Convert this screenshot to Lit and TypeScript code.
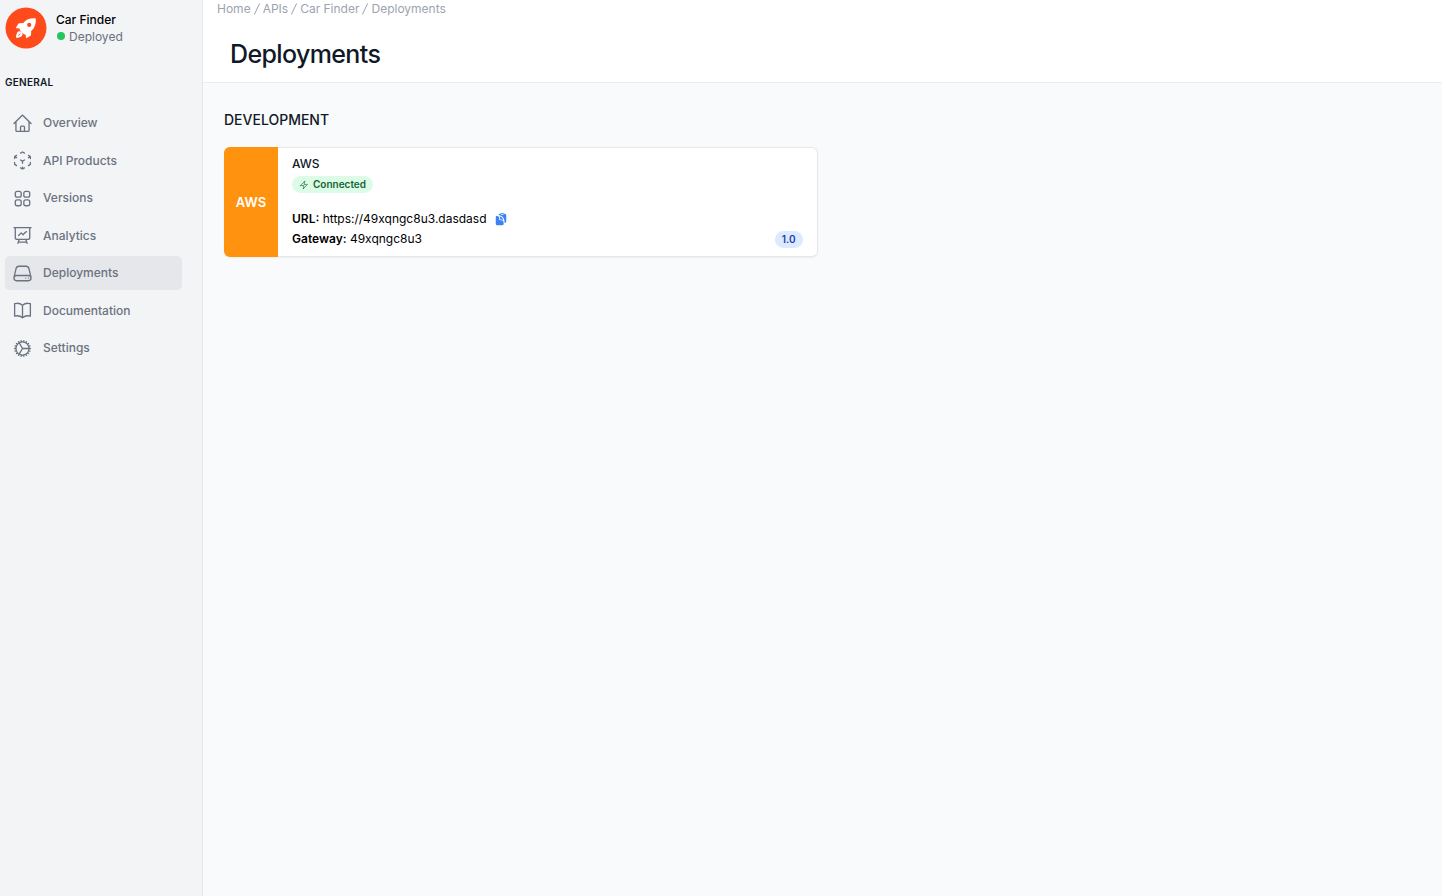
import { LitElement, html, css, svg } from "lit";
import { customElement } from "lit/decorators.js";

interface NavItem {
  label: string;
  icon: string;
  active?: boolean;
}

const NAV: NavItem[] = [
  {
    label: "Overview",
    icon: "m2.25 12 8.954-8.955c.44-.439 1.152-.439 1.591 0L21.75 12M4.5 9.75v10.125c0 .621.504 1.125 1.125 1.125H9.75v-4.875c0-.621.504-1.125 1.125-1.125h2.25c.621 0 1.125.504 1.125 1.125V21h4.125c.621 0 1.125-.504 1.125-1.125V9.75M8.25 21h8.25",
  },
  {
    label: "API Products",
    icon: "m21 7.5-2.25-1.313M21 7.5v2.25m0-2.25-2.25 1.313M3 7.5l2.25-1.313M3 7.5l2.25 1.313M3 7.5v2.25m9 3 2.25-1.313M12 12.75l-2.25-1.313M12 12.75V15m0 6.75 2.25-1.313M12 21.75V19.5m0 2.25-2.25-1.313m0-16.875L12 2.25l2.25 1.313M21 14.25v2.25l-2.25 1.313m-13.5 0L3 16.5v-2.25",
  },
  {
    label: "Versions",
    icon: "M3.75 6A2.25 2.25 0 0 1 6 3.75h2.25A2.25 2.25 0 0 1 10.5 6v2.25a2.25 2.25 0 0 1-2.25 2.25H6a2.25 2.25 0 0 1-2.25-2.25V6ZM3.75 15.75A2.25 2.25 0 0 1 6 13.5h2.25a2.25 2.25 0 0 1 2.25 2.25V18a2.25 2.25 0 0 1-2.25 2.25H6A2.25 2.25 0 0 1 3.75 18v-2.25ZM13.5 6a2.25 2.25 0 0 1 2.25-2.25H18A2.25 2.25 0 0 1 20.25 6v2.25A2.25 2.25 0 0 1 18 10.5h-2.25a2.25 2.25 0 0 1-2.25-2.25V6ZM13.5 15.75a2.25 2.25 0 0 1 2.25-2.25H18a2.25 2.25 0 0 1 2.25 2.25V18A2.25 2.25 0 0 1 18 20.25h-2.25A2.25 2.25 0 0 1 13.5 18v-2.25Z",
  },
  {
    label: "Analytics",
    icon: "M3.75 3v11.25A2.25 2.25 0 0 0 6 16.5h2.25M3.75 3h-1.5m1.5 0h16.5m0 0h1.5m-1.5 0v11.25A2.25 2.25 0 0 1 18 16.5h-2.25m-7.5 0h7.5m-7.5 0-1 3m8.5-3 1 3m0 0 .5 1.5m-.5-1.5h-9.5m0 0-.5 1.5m.75-9 3-3 2.148 2.148A12.061 12.061 0 0 1 16.5 7.605",
  },
  {
    label: "Deployments",
    active: true,
    icon: "M21.75 17.25v-.228a4.5 4.5 0 0 0-.12-1.03l-2.268-9.64a3.375 3.375 0 0 0-3.285-2.602H7.923a3.375 3.375 0 0 0-3.285 2.602l-2.268 9.64a4.5 4.5 0 0 0-.12 1.03v.228m19.5 0a3 3 0 0 1-3 3H5.25a3 3 0 0 1-3-3m19.5 0a3 3 0 0 0-3-3H5.25a3 3 0 0 0-3 3m16.5 0h.008v.008h-.008v-.008Zm-3 0h.008v.008h-.008v-.008Z",
  },
  {
    label: "Documentation",
    icon: "M12 6.042A8.967 8.967 0 0 0 6 3.75c-1.052 0-2.062.18-3 .512v14.25A8.987 8.987 0 0 1 6 18c2.305 0 4.408.867 6 2.292m0-14.25a8.966 8.966 0 0 1 6-2.292c1.052 0 2.062.18 3 .512v14.25A8.987 8.987 0 0 0 18 18a8.967 8.967 0 0 0-6 2.292m0-14.25v14.25",
  },
  {
    label: "Settings",
    icon: "M4.5 12a7.5 7.5 0 0 0 15 0m-15 0a7.5 7.5 0 1 1 15 0m-15 0H3m16.5 0H21m-1.5 0H12m-8.457 3.077 1.41-.513m14.095-5.13 1.41-.513M5.106 17.785l1.15-.964m11.49-9.642 1.149-.964M7.501 19.795l.75-1.3m7.5-12.99.75-1.3m-6.063 16.658.26-1.477m2.605-14.772.26-1.477m0 17.726-.26-1.477M10.698 4.614l-.26-1.477M16.5 19.794l-.75-1.299M7.5 4.205 12 12m6.894 5.785-1.149-.964M6.256 7.178l-1.15-.964m15.352 8.864-1.41-.513M4.954 9.435l-1.41-.514M12.002 12l-3.75 6.495",
  },
];

const BOLT = "m3.75 13.5 10.5-11.25L12 10.5h8.25L9.75 21.75 12 13.5H3.75Z";

const outline = (d: string, cls: string) => html`
  <svg class=${cls} viewBox="0 0 24 24" fill="none" stroke="currentColor" stroke-width="1.5"
    stroke-linecap="round" stroke-linejoin="round" aria-hidden="true">${svg`<path d=${d} />`}</svg>`;

@customElement("app-sidebar")
export class AppSidebar extends LitElement {
  static styles = css`
    :host { display: block; }
    .brand { display: flex; align-items: center; gap: 9px; height: 41px; }
    .logo { width: 42px; height: 42px; flex: none; }
    .name { font-size: 12px; line-height: 17px; font-weight: 500; color: #000; }
    .state { display: flex; align-items: center; gap: 4px; font-size: 12px; line-height: 17px; color: #6b7280; padding-left: 1px; }
    .dot { width: 8px; height: 8px; border-radius: 50%; background: #22c55e; }
    .group { margin: 27px 0 17px; font-size: 10px; line-height: 14px; font-weight: 600; letter-spacing: 0.025em; color: #111827; }
    .list { display: flex; flex-direction: column; justify-content: space-between; min-height: 259px; margin: 0; padding: 0; list-style: none; }
    .item { display: flex; align-items: center; gap: 10px; box-sizing: border-box; height: 34px; padding: 0 7px; border-radius: 5px; font-size: 12px; line-height: 20px; font-weight: 500; color: #6b7280; text-decoration: none; }
    .active { background: #e5e7eb; }
    .icon { width: 21px; height: 21px; flex: none; }
  `;

  render() {
    return html`
      <div class="brand">
        <svg class="logo" viewBox="0 0 42 42" aria-hidden="true">
          <circle cx="21" cy="21" r="20.5" fill="#ff4a1c" />
          <path fill="#fff" d="M30.700 11.400c-5-.5-9.200.8-12.500 4.600l-3.700.2c-.6 0-1.100.3-1.400.8l-2 3.400c-.2.4 0 .8.500.8l3.200.4c-.3.8-.2 1.300.3 1.900l3.600 3.600c.6.500 1.100.6 1.900.3l.4 3.200c0 .5.400.7.800.500l3.400-2c.5-.3.8-.8.800-1.400l.2-3.700c3.700-3.300 5-7.600 4.500-12.600Z" />
          <circle cx="24.200" cy="17.900" r="2.100" fill="#ff4a1c" />
          <path fill="#fff" d="M13 24.800c-1.400 1.200-2 3.200-2 6 2.800 0 4.800-.6 6-2 .8-1 .7-2.500-.2-3.500-1.100-1.100-2.700-1.300-3.800-.5Z" />
          <path d="m13.600 28.200 1.500-1.500" stroke="#ff4a1c" stroke-width="1" stroke-linecap="round" />
        </svg>
        <div>
          <div class="name">Car Finder</div>
          <div class="state"><span class="dot"></span>Deployed</div>
        </div>
      </div>
      <h2 class="group">GENERAL</h2>
      <nav aria-label="General">
        <ul class="list">
          ${NAV.map(
            (n) => html`<li>
              <a class="item ${n.active ? "active" : ""}" href="#" aria-current=${n.active ? "page" : "false"}>
                ${outline(n.icon, "icon")}<span>${n.label}</span>
              </a>
            </li>`
          )}
        </ul>
      </nav>
    `;
  }
}

@customElement("deployment-card")
export class DeploymentCard extends LitElement {
  static styles = css`
    :host { display: block; }
    .card { display: flex; background: #fff; border-radius: 6px; overflow: hidden; box-shadow: inset 0 0 0 1px #e5e7eb, 0 1px 2px rgba(0, 0, 0, 0.06); }
    .mark { display: flex; align-items: center; justify-content: center; width: 54px; flex: none; background: #ff930f; color: #fff; font-size: 13px; font-weight: 600; }
    .body { flex: 1; padding: 8px 15px 8px 14px; font-size: 12px; line-height: 20px; color: #000; }
    .title { margin: 0; font-size: 12px; line-height: 18px; font-weight: 500; color: #111827; }
    .pill { display: inline-flex; align-items: center; border-radius: 9px; padding: 0 7px; font-size: 10px; line-height: 17px; font-weight: 600; }
    .ok { gap: 4px; background: #dcfce7; color: #166534; }
    .version { background: #dbeafe; color: #1e40af; }
    .bolt { width: 10px; height: 10px; }
    .head { display: flex; flex-direction: column; align-items: flex-start; gap: 3px; margin-bottom: 16px; }
    .row { display: flex; align-items: center; }
    .url { gap: 7px; }
    .foot { justify-content: space-between; }
    .copy { display: flex; padding: 0; border: 0; background: none; color: #3b82f6; cursor: pointer; }
    .clip { width: 14px; height: 14px; }
    b { font-weight: 600; }
  `;

  render() {
    return html`
      <article class="card">
        <div class="mark">AWS</div>
        <div class="body">
          <div class="head">
            <h3 class="title">AWS</h3>
            <span class="pill ok">${outline(BOLT, "bolt")}Connected</span>
          </div>
          <div class="row url">
            <span><b>URL:</b> https://49xqngc8u3.dasdasd</span>
            <button class="copy" type="button" aria-label="Copy URL">
              <svg class="clip" viewBox="0 0 24 24" fill="currentColor" aria-hidden="true">
                <path fill-rule="evenodd" d="M17.663 3.118c.225.015.45.032.673.050C19.876 3.298 21 4.604 21 6.109v9.642a3 3 0 0 1-3 3V16.500c0-5.922-4.576-10.775-10.384-11.217.324-1.132 1.300-2.010 2.548-2.114.224-.019.448-.036.673-.051A3 3 0 0 1 13.500 1.500H15a3 3 0 0 1 2.663 1.618ZM12 4.500A1.500 1.500 0 0 1 13.500 3H15a1.500 1.500 0 0 1 1.500 1.500H12Z" clip-rule="evenodd" />
                <path d="M3 8.625c0-1.036.84-1.875 1.875-1.875h.375A3.750 3.750 0 0 1 9 10.500v1.875c0 1.036.84 1.875 1.875 1.875h1.875A3.750 3.750 0 0 1 16.500 18v2.625c0 1.035-.84 1.875-1.875 1.875h-9.750A1.875 1.875 0 0 1 3 20.625v-12Z" />
                <path d="M10.500 10.500a5.230 5.230 0 0 0-1.279-3.434 9.768 9.768 0 0 1 6.963 6.963 5.230 5.230 0 0 0-3.434-1.279h-1.875a.375.375 0 0 1-.375-.375V10.500Z" />
              </svg>
            </button>
          </div>
          <div class="row foot">
            <span><b>Gateway:</b> 49xqngc8u3</span>
            <span class="pill version">1.0</span>
          </div>
        </div>
      </article>
    `;
  }
}

@customElement("app-root")
export class AppRoot extends LitElement {
  static styles = css`
    :host { display: grid; grid-template-columns: 203px 1fr; min-height: 100vh; font-family: Inter, "Liberation Sans", sans-serif; background: #f9fafb; }
    .side { box-sizing: border-box; padding: 7px 20px 0 5px; background: #f3f4f6; border-right: 1px solid #e5e7eb; }
    .top { background: #fff; border-bottom: 1px solid #eceef1; padding: 0 14px 11px; }
    .crumbs { display: flex; gap: 3px; margin: 0; padding: 0; list-style: none; font-size: 12px; line-height: 18px; color: #9ca3af; }
    .crumb { color: inherit; text-decoration: none; }
    .sep { display: flex; align-items: center; }
    .slash { width: 6px; height: 12px; }
    .title { margin: 19px 14px 0 13px; font-size: 25px; line-height: 34px; font-weight: 500; letter-spacing: -0.025em; color: #111827; }
    .main { padding: 27px 21px; }
    .env { margin: 0 0 17px; font-size: 14px; line-height: 20px; font-weight: 500; color: #111827; }
    .cards { display: grid; grid-template-columns: repeat(2, 1fr); gap: 10px; }
  `;

  render() {
    const crumbs = ["Home", "APIs", "Car Finder", "Deployments"];
    const slash = html`<li class="sep" aria-hidden="true">
      <svg class="slash" viewBox="0 0 6 12" fill="none" stroke="currentColor" stroke-linecap="round"><path d="M5.500 .8.5 11.200" /></svg>
    </li>`;
    return html`
      <app-sidebar class="side"></app-sidebar>
      <div>
        <header class="top">
          <nav aria-label="Breadcrumb">
            <ol class="crumbs">
              ${crumbs.map((c, i) => html`${i ? slash : ""}<li><a class="crumb" href="#">${c}</a></li>`)}
            </ol>
          </nav>
          <h1 class="title">Deployments</h1>
        </header>
        <main class="main">
          <h2 class="env">DEVELOPMENT</h2>
          <div class="cards"><deployment-card></deployment-card></div>
        </main>
      </div>
    `;
  }
}
